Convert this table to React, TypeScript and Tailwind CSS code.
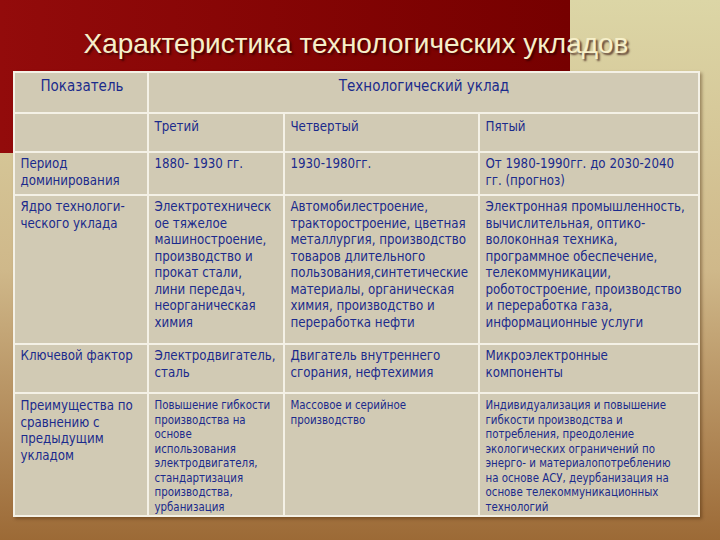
const rows = [
  {
    label: "Период\nдоминирования",
    cells: ["1880- 1930 гг.", "1930-1980гг.", "От 1980-1990гг. до 2030-2040\nгг. (прогноз)"],
    h: "h-[43px]",
  },
  {
    label: "Ядро технологи-\nческого уклада",
    cells: [
      "Электротехническ\nое тяжелое\nмашиностроение,\nпроизводство и\nпрокат стали,\nлини передач,\nнеорганическая\nхимия",
      "Автомобилестроение,\nтракторостроение, цветная\nметаллургия, производство\nтоваров длительного\nпользования,синтетические\nматериалы, органическая\nхимия, производство и\nпереработка нефти",
      "Электронная промышленность,\nвычислительная, оптико-\nволоконная техника,\nпрограммное обеспечение,\nтелекоммуникации,\nроботостроение, производство\nи переработка газа,\nинформационные услуги",
    ],
    h: "h-[149px]",
  },
  {
    label: "Ключевой фактор",
    cells: ["Электродвигатель,\nсталь", "Двигатель внутреннего\nсгорания, нефтехимия", "Микроэлектронные\nкомпоненты"],
    h: "h-[49px]",
  },
];

const lastRow = [
  "Повышение гибкости\nпроизводства на\nоснове\nиспользования\nэлектродвигателя,\nстандартизация\nпроизводства,\nурбанизация",
  "Массовое и серийное\nпроизводство",
  "Индивидуализация и повышение\nгибкости производства и\nпотребления, преодоление\nэкологических ограничений по\nэнерго- и материалопотреблению\nна основе АСУ, деурбанизация на\nоснове телекоммуникационных\nтехнологий",
];

const cell = "border-2 border-[#f4f1e6] align-top pl-[5px] pr-[4px] whitespace-pre-line text-[#1b2a8c]";

export default function App() {
  return (
    <div
      className="relative h-[540px] w-[720px] overflow-hidden bg-gradient-to-b from-[#dcd6a6] via-[#cfb88a] to-[#9c6a36]"
      style={{ fontFamily: '"DejaVu Sans Condensed", "Liberation Sans", Arial, sans-serif' }}
    >
      {/* red block behind title */}
      <div className="absolute left-0 top-0 h-[153px] w-[570px] bg-gradient-to-r from-[#930b0b] to-[#760000]" />

      <div className="relative flex flex-col items-center">
        <h1
          className="ml-[-8px] mt-[26px] h-[41px] text-[28px] leading-[36px] text-[#f6efc9] [text-shadow:2px_2px_2px_rgba(40,0,0,0.7)]"
          style={{ fontFamily: '"Liberation Sans", Arial, sans-serif' }}
        >
          Характеристика технологических укладов
        </h1>

        <table className="ml-[-7px] mt-[4px] w-[684px] table-fixed border-collapse border-2 border-[#f4f1e6] bg-[#d1cab4] text-[13.2px] leading-[16.5px] shadow-[2px_2px_3px_rgba(60,30,0,0.4)]">
          <colgroup>
            <col className="w-[134px]" />
            <col className="w-[136px]" />
            <col className="w-[195px]" />
            <col className="w-[219px]" />
          </colgroup>
          <tbody>
            <tr className="h-[41px]">
              <td className={`${cell} pt-[5px] text-center text-[15px]`}>Показатель</td>
              <td className={`${cell} pt-[5px] text-center text-[15px]`} colSpan={3}>
                Технологический уклад
              </td>
            </tr>
            <tr className="h-[39px]">
              <td className={cell} />
              <td className={`${cell} pt-[5px]`}>Третий</td>
              <td className={`${cell} pt-[5px]`}>Четвертый</td>
              <td className={`${cell} pt-[5px]`}>Пятый</td>
            </tr>
            {rows.map((r) => (
              <tr key={r.label} className={r.h}>
                <td className={`${cell} pt-[3px]`}>{r.label}</td>
                {r.cells.map((c, i) => (
                  <td key={i} className={`${cell} pt-[3px]`}>
                    {c}
                  </td>
                ))}
              </tr>
            ))}
            <tr className="h-[123px]">
              <td className={`${cell} pt-[4px]`}>{"Преимущества по\nсравнению с\nпредыдущим\nукладом"}</td>
              {lastRow.map((c, i) => (
                <td key={i} className={`${cell} pt-[4px] text-[11.4px] leading-[14.5px]`}>
                  {c}
                </td>
              ))}
            </tr>
          </tbody>
        </table>
      </div>
    </div>
  );
}
